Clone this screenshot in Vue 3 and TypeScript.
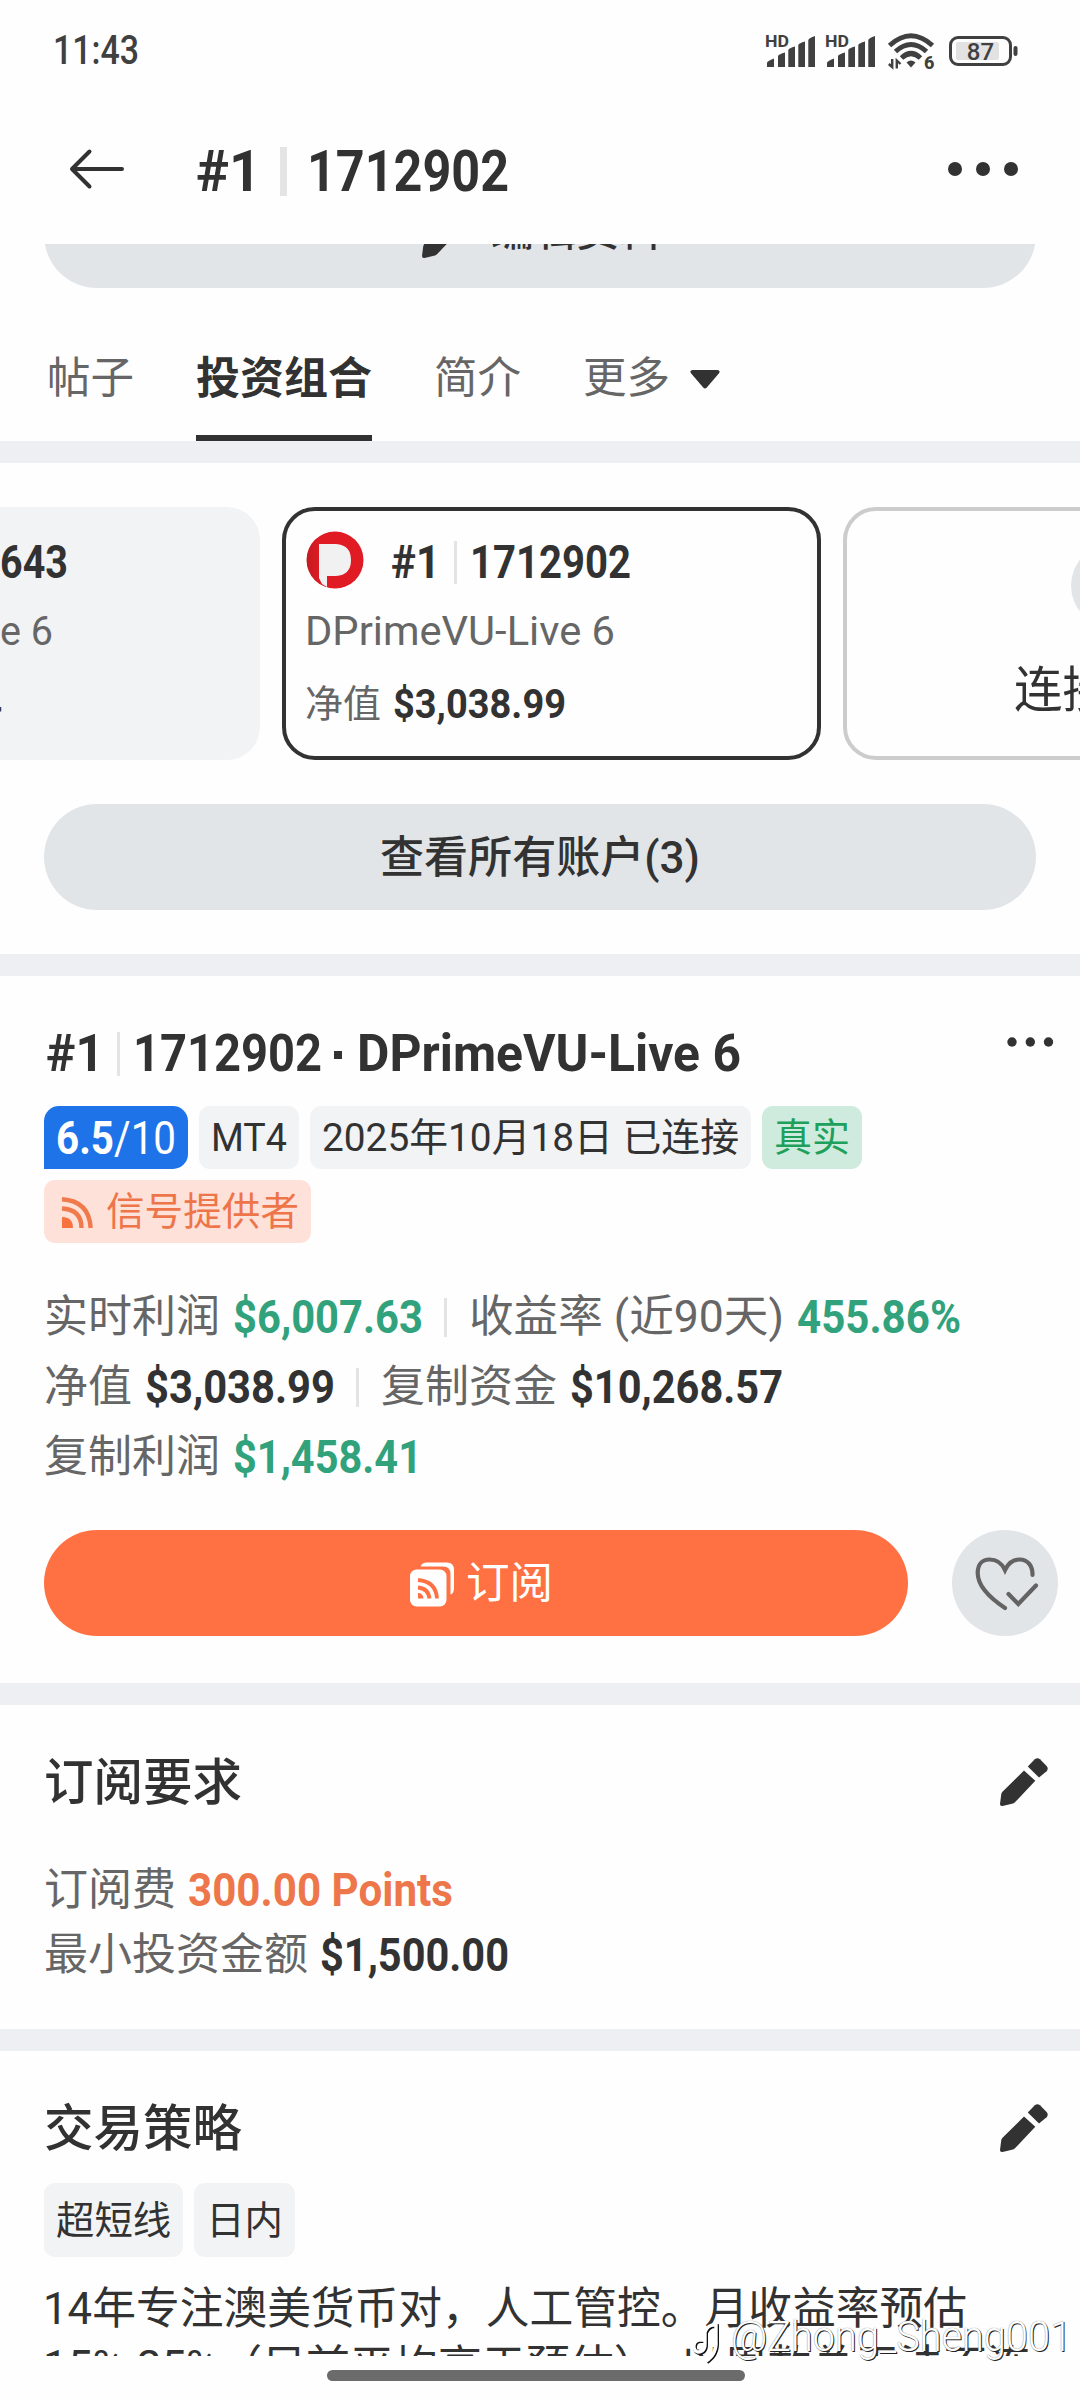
<script setup lang="ts">
import type { Directive } from 'vue'

// Squeezes a run of text into the given advance width, in pixels.
const vFit: Directive<HTMLElement, number> = {
  mounted(el, binding) {
    const natural = el.getBoundingClientRect().width
    el.style.transform = `scaleX(${binding.value / natural})`
    el.style.marginRight = `${binding.value - natural}px`
  },
}

interface Stat {
  label: string
  labelWidth: number
  value: string
  valueWidth: number
  up?: boolean
}

const statRows: Stat[][] = [
  [
    { label: '实时利润', labelWidth: 176, value: '$6,007.63', valueWidth: 190, up: true },
    { label: '收益率 (近90天)', labelWidth: 315, value: '455.86%', valueWidth: 164, up: true },
  ],
  [
    { label: '净值', labelWidth: 88, value: '$3,038.99', valueWidth: 190 },
    { label: '复制资金', labelWidth: 176, value: '$10,268.57', valueWidth: 213 },
  ],
  [{ label: '复制利润', labelWidth: 176, value: '$1,458.41', valueWidth: 189, up: true }],
]

const penBody = 'M24 12.5 35.3 22.8 15 44.3Q13.8 45.4 12 45.8L2.5 48Q0 48.4 0 46L1.2 36.5Q1.4 35 2.5 33.8Z'
const penCap = 'M27.8 8.6 34.8 1.3Q37.4-.8 40 1.3L46.6 8Q48.8 10.6 46.6 13.2L39 19.4Z'
const noteMark = 'M14 19H8Q2 20 3 27 5 33 11 30 14 28 14 23L14 11Q17 3 25 4V19Q26 33 15 40'
</script>

<template>
  <div class="screen">
    <header class="status">
      <span v-fit="86" class="clock">11:43</span>
      <div class="status-icons">
        <svg v-for="n in 2" :key="n" class="signal" width="52" height="34" viewBox="0 0 52 34">
          <text x="0" y="12.500" textLength="24" lengthAdjust="spacingAndGlyphs">HD</text>
          <path d="M2 33V29Q2 27 9 24.500V33ZM13 33V22Q14 20 20 18.500V33ZM23.300 33V16Q24 14 30 12.500V33ZM33.300 33V11Q34 9 40 7.500V33ZM43.300 33V6Q44 4 50 2V33Z" />
        </svg>
        <svg class="wifi" width="46" height="36" viewBox="0 0 46 36">
          <g fill="none" stroke="#404040" stroke-width="5">
            <path d="M1.500 12.500Q23-7 44.500 12.500" />
            <path d="M7.500 18.500Q23 4.500 38.500 18.500" />
            <path d="M13.500 25Q23 16 32.500 25" />
          </g>
          <path d="M18.500 29.500Q23 25.500 27.500 29.500L23 34.500Z" />
          <path d="M4.200 26V34L.8 31M8.800 35.500V27.500L12.500 31" fill="none" stroke="#404040" stroke-width="2.400" />
          <text x="36" y="35.500">6</text>
        </svg>
        <svg width="70" height="32" viewBox="0 0 70 32">
          <rect x="1.500" y="2.500" width="60" height="27" rx="7.500" fill="none" stroke="#404040" stroke-width="3" />
          <rect x="7" y="7" width="43" height="18" rx="2" fill="#e2e2e2" />
          <rect x="64.500" y="11" width="4" height="10" rx="2" />
          <text class="level" x="31.500" y="25" text-anchor="middle">87</text>
        </svg>
      </div>
    </header>

    <nav class="bar">
      <svg class="back" width="56" height="42" viewBox="0 0 56 42">
        <path d="M20.500 3.500 3 21 20.500 38.500M3 21H53" fill="none" stroke="#323232" stroke-width="4" stroke-linecap="round" stroke-linejoin="round" />
      </svg>
      <h1 class="bar-title din"><span v-fit="65">#1</span><i class="rule"></i><span v-fit="202">1712902</span></h1>
      <svg class="more" width="72" height="16" viewBox="0 0 72 16">
        <circle cx="8" cy="8" r="7" /><circle cx="36" cy="8" r="7" /><circle cx="64" cy="8" r="7" />
      </svg>
    </nav>

    <div class="edit-clip">
      <div class="pill edit">
        <svg width="48" height="48" viewBox="0 0 48 48"><path :d="penBody" /><path :d="penCap" /></svg>
        <span v-fit="171">编辑资料</span>
      </div>
    </div>

    <div class="tabs">
      <span class="tab">帖子</span>
      <span class="tab active">投资组合</span>
      <span class="tab">简介</span>
      <span class="tab">更多
        <svg width="30" height="19" viewBox="0 0 30 19"><path d="M2.500 0H27.500Q31 .5 28.800 3.500L16.800 17.500Q15 19.500 13.200 17.500L1.200 3.500Q-1 .5 2.500 0Z" /></svg>
      </span>
    </div>

    <section class="block accounts">
      <div class="cards">
        <div class="card previous">
          <div class="card-name din"><span v-fit="68">643</span></div>
          <div class="card-server"><span v-fit="53">e 6</span></div>
          <div class="card-equity"><b v-fit="20" class="din">4</b></div>
        </div>
        <div class="card current">
          <div class="card-name din">
            <svg class="logo" width="58" height="58" viewBox="0 0 58 58">
              <defs>
                <linearGradient id="shade" x1="0" y1="0" x2="1" y2="0">
                  <stop offset="0" stop-color="#c31a20" /><stop offset="0.250" stop-color="#e01b24" />
                </linearGradient>
              </defs>
              <circle cx="29" cy="29" r="28.500" fill="url(#shade)" />
              <path d="M13 13H30Q45 14 45 29 45 44 30 45H21V56L16 53 13 47Z" fill="#f1f1f1" />
            </svg>
            <span v-fit="49">#1</span><i class="rule"></i><span v-fit="161">1712902</span>
          </div>
          <div class="card-server"><span v-fit="310">DPrimeVU-Live 6</span></div>
          <div class="card-equity"><span>净值</span><b v-fit="173" class="din">$3,038.99</b></div>
        </div>
        <div class="card connect">
          <i class="plus"></i>
          <span>连接账户</span>
        </div>
      </div>
      <div class="pill all"><span v-fit="320">查看所有账户(3)</span></div>
    </section>

    <section class="block summary">
      <div class="summary-head">
        <h2 class="din">
          <span v-fit="58">#1</span><i class="rule"></i><span v-fit="189">1712902</span><i class="dot"></i><span v-fit="384">DPrimeVU-Live 6</span>
        </h2>
        <svg class="more-small" width="48" height="12" viewBox="0 0 48 12">
          <circle cx="6" cy="6" r="4.700" /><circle cx="24.300" cy="6" r="4.700" /><circle cx="42.500" cy="6" r="4.700" />
        </svg>
      </div>
      <div class="tags">
        <span class="tag score"><b v-fit="58" class="din">6.5</b><span v-fit="62">/10</span></span>
        <span class="tag"><span v-fit="76">MT4</span></span>
        <span class="tag"><span v-fit="417">2025年10月18日 已连接</span></span>
        <span class="tag real"><span v-fit="76">真实</span></span>
        <span class="tag provider">
          <svg width="31" height="31" viewBox="0 0 31 31">
            <path d="M0 20Q11 20 11 31H0Z" fill="#f8723e" />
            <path d="M0 11.500Q19.500 12.500 19.500 31M0 2.300Q27 4 28.700 31" fill="none" stroke="#f07a4c" stroke-width="4.400" />
          </svg>
          <span v-fit="193">信号提供者</span>
        </span>
      </div>
      <div class="stats">
        <div v-for="(row, r) in statRows" :key="r" class="stat-row">
          <template v-for="(stat, s) in row" :key="stat.label">
            <i v-if="s > 0" class="rule"></i>
            <span v-fit="stat.labelWidth" class="muted">{{ stat.label }}</span>
            <b v-fit="stat.valueWidth" class="din value" :class="{ up: stat.up }">{{ stat.value }}</b>
          </template>
        </div>
      </div>
      <div class="actions">
        <div class="pill subscribe">
          <svg width="45" height="45" viewBox="0 0 45 45">
            <path d="M10.500 4.500Q12 .5 17 .5H37Q44 .5 44 8V26Q44 31.500 40.500 32.500V12Q40.500 4.500 33 4.500Z" fill="#fff" />
            <rect x="0" y="7.500" width="36.500" height="37" rx="6.500" fill="#fff" />
            <path d="M8 31Q13 31 13.500 36.500H8Z" fill="#ff7043" />
            <path d="M8 25.500Q18.500 26.500 19.500 36.500M8 18Q26 19.500 27 36.500" fill="none" stroke="#ff7043" stroke-width="3.800" />
          </svg>
          <span>订阅</span>
        </div>
        <div class="favorite">
          <svg width="106" height="106" viewBox="0 0 106 106">
            <path d="M53 78C38 68 25.700 56 25.700 43 25.700 34 30.500 29.500 37.500 29.500 45 29.500 50 33.500 53 40 56 33.500 61 29.500 67.500 29.500 76 29.500 80.700 36 80.500 45M56.500 64 66.300 74 84 55.500" fill="none" stroke="#636363" stroke-width="4.200" stroke-linecap="round" />
          </svg>
        </div>
      </div>
    </section>

    <section class="block requirements">
      <div class="block-head">
        <h3>订阅要求</h3>
        <svg width="48" height="48" viewBox="0 0 48 48"><path :d="penBody" /><path :d="penCap" /></svg>
      </div>
      <div class="need"><span class="muted">订阅费</span><b v-fit="265" class="din value points">300.00 Points</b></div>
      <div class="need"><span class="muted">最小投资金额</span><b v-fit="189" class="din value">$1,500.00</b></div>
    </section>

    <section class="block strategy">
      <div class="block-head">
        <h3>交易策略</h3>
        <svg width="48" height="48" viewBox="0 0 48 48"><path :d="penBody" /><path :d="penCap" /></svg>
      </div>
      <div class="styles"><span>超短线</span><span>日内</span></div>
      <div class="about">
        <p><span v-fit="924">14年专注澳美货币对，人工管控。月收益率预估</span></p>
        <p><span v-fit="988">15%-25%（目前平均高于预估），以周数总无法不连</span></p>
      </div>
    </section>

    <div class="home"></div>

    <div class="watermark">
      <svg width="32" height="44" viewBox="0 0 32 44">
        <path :d="noteMark" fill="none" stroke="#111" stroke-width="4" transform="translate(1 1)" />
        <path :d="noteMark" fill="none" stroke="#fff" stroke-width="3.400" />
      </svg>
      <span v-fit="341">@Zhong_Sheng001</span>
    </div>
  </div>
</template>

<style>
body { background: #fefefe; }
</style>

<style scoped>
.screen {
  position: relative;
  width: 1080px;
  height: 2400px;
  overflow: hidden;
  background: #fefefe;
  color: #323232;
  fill: #323232;
  font-family: Roboto, "Noto Sans CJK SC", sans-serif;
  font-size: 44px;
  line-height: 60px;
  white-space: nowrap;
}
.screen * { box-sizing: border-box; }
h1, h2, h3, p { margin: 0; font-weight: inherit; font-size: inherit; }
svg { display: block; flex: none; overflow: visible; }
span, b { display: inline-block; flex: none; transform-origin: left center; }
.din { font-weight: 700; }
.rule { flex: none; background: #e4e4e4; }
.muted { color: #666; }

.status { display: flex; align-items: center; justify-content: space-between; height: 100px; padding: 1px 61px 0 53px; color: #404040; fill: #404040; }
.clock { font-size: 40px; font-weight: 500; }
.status-icons { display: flex; align-items: center; }
.signal { margin-right: 8px; }
.signal text { font-size: 16.500px; font-weight: 700; }
.wifi { margin: 0 15px 0 3px; }
.wifi text { font-size: 18px; font-weight: 800; }
.level { font-size: 24px; font-weight: 500; }

.bar { display: flex; align-items: center; height: 144px; padding: 0 61px 6px 69px; }
.bar-title { display: flex; align-items: center; margin: 4px 0 0 71px; font-size: 58px; }
.bar-title .rule { width: 7px; height: 49px; margin: 0 20px 0 19px; }
.more { margin-left: auto; }

.pill { display: flex; align-items: center; justify-content: center; height: 106px; border-radius: 53px; background: #e2e5e8; }
.edit-clip { display: flex; align-items: flex-end; height: 44px; padding: 0 44px; overflow: hidden; }
.edit { flex: 1; gap: 21px; padding: 0 0 2px 4px; font-size: 42px; font-weight: 500; }
.edit span { margin-bottom: 4px; }

.tabs { display: flex; height: 153px; padding: 44px 0 0 47px; gap: 62px; }
.tab { display: flex; align-items: center; height: 109px; padding-bottom: 15px; font-size: 43.500px; color: #666; }
.tab svg { margin-left: 20px; }
.active { font-size: 44px; font-weight: 700; color: #323232; border-bottom: 6px solid #323232; padding-bottom: 9px; }

.block { border-top: 22px solid #eeeff2; }
.accounts { height: 513px; padding-top: 44px; }
.cards { display: flex; gap: 22px; }
.card { flex: none; width: 539px; height: 253px; border-radius: 33px; padding: 20px 20px 20px 19px; }
.previous { width: 260px; padding: 24px 0; border-radius: 0 33px 33px 0; background: #f2f3f5; }
.previous .card-equity { margin-left: -18px; }
.current { border: 4px solid #323232; }
.connect { display: flex; flex-direction: column; align-items: center; padding: 33px 20px 0; border: 4px solid #ccc; font-size: 48.500px; }
.plus { width: 83px; height: 83px; border-radius: 50%; background: #e2e5e8; }
.connect span { margin-top: 34px; margin-left: -3px; }
.card-name { display: flex; align-items: center; height: 60px; font-size: 46px; padding-top: 2px; }
.card-name .rule { width: 3px; height: 43px; margin: 0 13px 0 14px; }
.logo { margin: -4px 27px 0 1px; }
.card-server { height: 64px; padding-top: 10px; font-size: 41px; line-height: 60px; color: #666; font-weight: 400; }
.card-equity { display: flex; align-items: center; height: 60px; margin-top: 19px; font-size: 38px; gap: 12px; color: #666; }
.card-equity b { font-size: 41px; color: #323232; }
.card-equity span { margin-bottom: 1px; }
.all { margin: 44px 44px 0; font-weight: 500; }
.all span { padding-top: 2px; }

.summary { height: 729px; }
.summary-head { display: flex; justify-content: space-between; height: 130px; padding: 48px 26px 0 46px; }
.summary-head h2 { display: flex; align-items: center; height: 60px; font-size: 52px; }
.summary-head .rule { width: 3px; height: 44px; margin: 0 13px 0 13px; }
.dot { width: 8px; height: 8px; margin: 1px 15px 0 12px; background: #323232; }
.more-small { margin-top: 12px; }
.tags { display: flex; flex-wrap: wrap; gap: 11px; padding: 0 200px 0 44px; }
.tag { display: flex; align-items: center; height: 63px; padding: 1px 12px 0; border-radius: 11px; background: #f2f3f5; font-size: 39px; }
.score { border-radius: 15px 15px 15px 0; background: #1f73e8; color: #fff; font-size: 46px; }
.real { background: #ceebdd; color: #1da05c; }
.provider { padding-left: 18px; background: #fee2d9; color: #ee754a; }
.provider svg { margin-right: 13px; }
.stats { padding: 39px 44px 0; }
.stat-row { display: flex; align-items: center; height: 70px; }
.stat-row .rule { width: 3px; height: 39px; margin: 0 22px 0 21px; }
.value { margin-left: 13px; font-size: 46px; color: #323232; }
.up { color: #31a27b; }
.points { color: #ee764b; }
.actions { display: flex; gap: 44px; padding: 38px 22px 0 44px; }
.subscribe { width: 864px; gap: 11px; padding: 2px 0 0 11px; background: #ff7043; color: #fff; font-size: 43.500px; }
.favorite { width: 106px; height: 106px; border-radius: 50%; background: #e2e5e8; }

.requirements { height: 346px; }
.block-head { display: flex; align-items: center; justify-content: space-between; padding: 0 32px 0 44px; font-size: 49.500px; font-weight: 500; }
.requirements .block-head { padding-top: 48px; height: 133px; align-items: flex-start; margin-bottom: 19px; }
.requirements .block-head svg, .strategy .block-head svg { margin-top: 5px; }
.need { display: flex; align-items: center; height: 65px; padding-left: 44px; }
.need .value { margin-left: 12px; }
.strategy .block-head { height: 132px; padding-top: 48px; align-items: flex-start; }
.styles { display: flex; gap: 11px; padding-left: 44px; font-size: 38.400px; }
.styles span { height: 74px; padding: 0 12px; line-height: 75px; border-radius: 11px; background: #f2f3f5; }
.about { height: 99px; padding: 23px 0 0 43px; overflow: hidden; line-height: 59px; }
.about p { height: 58px; }

.home { width: 418px; height: 11px; margin: 14px 0 0 327px; border-radius: 6px; background: #6b6b6b; }
.watermark { position: absolute; right: 8px; top: 2307px; display: flex; align-items: center; color: #fff; font-size: 42px; font-weight: 300; text-shadow: 1px 1px 0 #222, 0 0 1px #666; }
.watermark svg { margin: 12px 8px 0 0; }
</style>
